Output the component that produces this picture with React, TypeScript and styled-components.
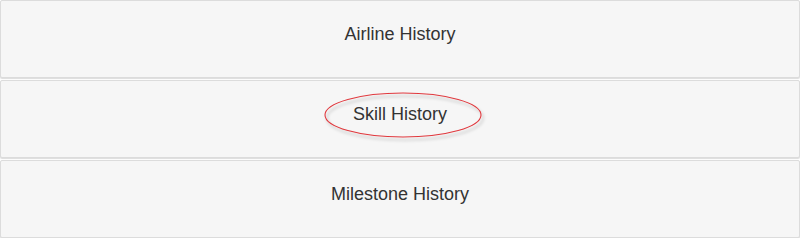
import React from 'react';
import styled, { createGlobalStyle } from 'styled-components';

const GlobalStyle = createGlobalStyle`
  html, body {
    margin: 0;
    padding: 0;
    background: #ffffff;
    font-family: "Liberation Sans", Arial, sans-serif;
  }
`;

const Menu = styled.div`
  display: flex;
  flex-direction: column;
  gap: 2px;
  width: 800px;
`;

const HistoryButton = styled.button`
  display: flex;
  align-items: center;
  justify-content: center;
  box-sizing: border-box;
  height: 78px;
  width: 100%;
  margin: 0;
  padding: 0 0 10px;
  background: #f6f6f6;
  border: 1px solid #dcdcdc;
  border-radius: 2px;
  box-shadow: 0 1px 1px rgba(0, 0, 0, 0.14);
  font-family: "Liberation Sans", Arial, sans-serif;
  font-size: 18px;
  color: #333333;
  cursor: pointer;
`;

const Label = styled.span`
  position: relative;
`;

const Highlight = styled.svg`
  position: absolute;
  left: 50%;
  top: 50%;
  width: 164px;
  height: 52px;
  transform: translate(calc(-50% + 3px), calc(-50% + 1px));
  overflow: visible;
  pointer-events: none;
`;

const items = [
  { label: 'Airline History', circled: false },
  { label: 'Skill History', circled: true },
  { label: 'Milestone History', circled: false },
];

const App: React.FC = () => (
  <>
    <GlobalStyle />
    <Menu>
      {items.map((item) => (
        <HistoryButton key={item.label}>
          <Label>
            {item.label}
            {item.circled && (
              <Highlight viewBox="0 0 164 52">
                <defs>
                  <filter id="ring-shadow" x="-10%" y="-20%" width="120%" height="150%">
                    <feDropShadow dx="2" dy="3" stdDeviation="1.5" floodColor="#000" floodOpacity="0.25" />
                  </filter>
                </defs>
                <ellipse
                  cx="82"
                  cy="26"
                  rx="78"
                  ry="22"
                  fill="none"
                  stroke="#e0393e"
                  strokeWidth="1.1"
                  filter="url(#ring-shadow)"
                />
              </Highlight>
            )}
          </Label>
        </HistoryButton>
      ))}
    </Menu>
  </>
);

export default App;
